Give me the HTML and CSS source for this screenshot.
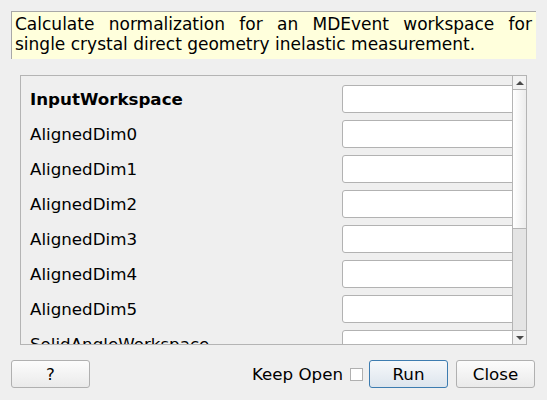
FILE: index.html
```html
<!DOCTYPE html>
<html>
<head>
<meta charset="utf-8">
<link rel="stylesheet" href="styles.css">
</head>
<body>
<div class="dialog">
  <div class="desc">Calculate normalization for an MDEvent workspace for single crystal direct geometry inelastic measurement.</div>
  <div class="scrollarea">
    <div class="viewport">
      <div class="rows">
        <div class="row"><span class="label bold">InputWorkspace</span><span class="field"></span></div>
        <div class="row"><span class="label">AlignedDim0</span><span class="field"></span></div>
        <div class="row"><span class="label">AlignedDim1</span><span class="field"></span></div>
        <div class="row"><span class="label">AlignedDim2</span><span class="field"></span></div>
        <div class="row"><span class="label">AlignedDim3</span><span class="field"></span></div>
        <div class="row"><span class="label">AlignedDim4</span><span class="field"></span></div>
        <div class="row"><span class="label">AlignedDim5</span><span class="field"></span></div>
        <div class="row"><span class="label">SolidAngleWorkspace</span><span class="field"></span></div>
      </div>
    </div>
    <div class="scrollbar">
      <div class="sb-btn sb-up"><span class="arrow-up"></span></div>
      <div class="sb-thumb"></div>
      <div class="sb-track"></div>
      <div class="sb-btn sb-down"><span class="arrow-down"></span></div>
    </div>
  </div>
  <div class="buttons">
    <button class="btn">?</button>
    <div class="spacer"></div>
    <span class="keep">Keep Open</span>
    <span class="check"></span>
    <button class="btn btn-default">Run</button>
    <button class="btn btn-close">Close</button>
  </div>
</div>
</body>
</html>
```
FILE: styles.css
```css
html, body {
  margin: 0;
  padding: 0;
  background: #efefef;
}
.dialog {
  width: 547px;
  height: 400px;
  display: flex;
  flex-direction: column;
  font-family: "DejaVu Sans", sans-serif;
  font-size: 16.7px;
  color: #000;
}
.desc {
  margin: 11px 11px 0 11px;
  height: 48px;
  box-sizing: border-box;
  border-top: 1px solid #a8a8a8;
  border-left: 1px solid #a8a8a8;
  background: #ffffdc;
  padding: 2px 4px 0 3px;
  font-size: 17px;
  line-height: 20px;
  text-align: justify;
}
.scrollarea {
  margin: 16px 0 0 20px;
  width: 507px;
  height: 270px;
  box-sizing: border-box;
  border: 1px solid #b4b4b4;
  display: flex;
}
.viewport {
  width: 491px;
  height: 100%;
  overflow: hidden;
}
.rows {
  display: flex;
  flex-direction: column;
  gap: 7px;
  padding: 9px 0 0 9px;
}
.row {
  display: flex;
  align-items: center;
  height: 28px;
  flex-shrink: 0;
}
.label {
  width: 312px;
  flex-shrink: 0;
  white-space: nowrap;
}
.bold {
  font-weight: bold;
}
.field {
  width: 200px;
  flex-shrink: 0;
  height: 28px;
  box-sizing: border-box;
  border: 1px solid #b2b2b2;
  border-radius: 3px;
  background: #fff;
}
.scrollbar {
  width: 14px;
  box-sizing: border-box;
  border-left: 1px solid #b4b4b4;
  display: flex;
  flex-direction: column;
}
.sb-btn {
  height: 13px;
  flex-shrink: 0;
  display: flex;
  align-items: center;
  justify-content: center;
  background: #f2f2f2;
}
.sb-up {
  border-bottom: 1px solid #b4b4b4;
}
.sb-down {
  border-top: 1px solid #b4b4b4;
}
.arrow-up {
  width: 0;
  height: 0;
  border-left: 4px solid transparent;
  border-right: 4px solid transparent;
  border-bottom: 4px solid #4a4a4a;
}
.arrow-down {
  width: 0;
  height: 0;
  border-left: 4px solid transparent;
  border-right: 4px solid transparent;
  border-top: 4px solid #4a4a4a;
}
.sb-thumb {
  height: 139px;
  flex-shrink: 0;
  box-sizing: border-box;
  border-bottom: 1px solid #b4b4b4;
  background: linear-gradient(to right, #ffffff, #ececec);
}
.sb-track {
  flex: 1;
  background: #e4e4e4;
}
.buttons {
  display: flex;
  align-items: center;
  margin: 15px 12px 0 11px;
  height: 28px;
}
.btn {
  height: 28px;
  width: 79px;
  box-sizing: border-box;
  border: 1px solid #b0b0b0;
  border-radius: 3px;
  background: linear-gradient(to bottom, #fcfcfc, #eaeaea);
  font-family: "DejaVu Sans", sans-serif;
  font-size: 16.7px;
  color: #000;
  padding: 0;
}
.spacer {
  flex: 1;
}
.keep {
  margin-right: 7px;
}
.check {
  width: 13px;
  height: 13px;
  box-sizing: border-box;
  border: 1px solid #b0b0b0;
  background: #fff;
  margin-right: 6px;
}
.btn-default {
  border-color: #3d7cb0;
  background: linear-gradient(to bottom, #f6f8fa, #dde5ed);
  margin-right: 8px;
}
```
